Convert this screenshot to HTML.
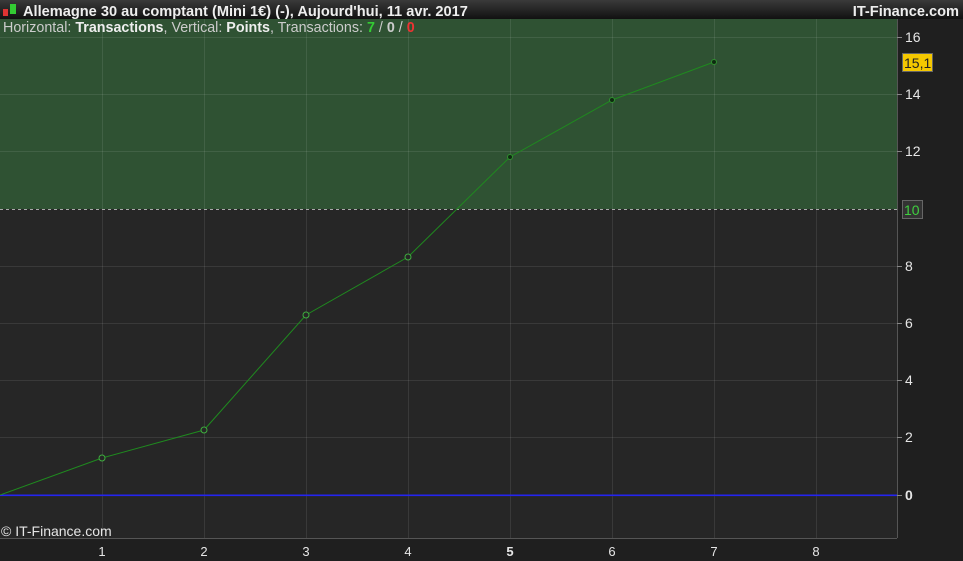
<!DOCTYPE html>
<html><head><meta charset="utf-8"><style>
body{margin:0;width:963px;height:561px;overflow:hidden;background:#1f1f1f;font-family:"Liberation Sans",sans-serif}
svg{display:block}
#blue{position:absolute;left:0;top:495px;width:897px;height:1px;background:#2424f0}
</style></head><body>
<svg width="963" height="561" xmlns="http://www.w3.org/2000/svg" font-family="Liberation Sans, sans-serif">
<defs><linearGradient id="tb" x1="0" y1="0" x2="0" y2="1"><stop offset="0" stop-color="#3a3a3a"/><stop offset="1" stop-color="#111"/></linearGradient></defs>
<rect x="0" y="0" width="963" height="561" fill="#1f1f1f"/>
<rect x="0" y="0" width="963" height="19" fill="url(#tb)"/>
<rect x="0" y="19" width="897" height="519" fill="#262626"/>
<rect x="0" y="19" width="897" height="190" fill="#2f5233"/>
<g stroke="#ffffff" stroke-opacity="0.09" stroke-width="1">
<line x1="102.5" y1="19" x2="102.5" y2="538"/><line x1="204.5" y1="19" x2="204.5" y2="538"/><line x1="306.5" y1="19" x2="306.5" y2="538"/><line x1="408.5" y1="19" x2="408.5" y2="538"/><line x1="510.5" y1="19" x2="510.5" y2="538"/><line x1="612.5" y1="19" x2="612.5" y2="538"/><line x1="714.5" y1="19" x2="714.5" y2="538"/><line x1="816.5" y1="19" x2="816.5" y2="538"/>
<line x1="0" y1="37.5" x2="897" y2="37.5"/><line x1="0" y1="94.5" x2="897" y2="94.5"/><line x1="0" y1="151.5" x2="897" y2="151.5"/><line x1="0" y1="266.5" x2="897" y2="266.5"/><line x1="0" y1="323.5" x2="897" y2="323.5"/><line x1="0" y1="380.5" x2="897" y2="380.5"/><line x1="0" y1="437.5" x2="897" y2="437.5"/>
</g>
<line x1="0" y1="209.5" x2="897" y2="209.5" stroke="#aaa" stroke-dasharray="3,3"/>
<rect x="0" y="494.5" width="897" height="1.6" fill="#2424f0"/>
<line x1="897.5" y1="19" x2="897.5" y2="538" stroke="#555"/>
<line x1="0" y1="538.5" x2="897" y2="538.5" stroke="#555"/>
<polyline points="0,495 102,458 204,430 306,315 408,257 510,157 612,100 714,62" fill="none" stroke="#1f8a1f" stroke-width="1"/>
<g fill="#262626" stroke="#3fae3f"><circle cx="102" cy="458" r="3"/><circle cx="204" cy="430" r="3"/><circle cx="306" cy="315" r="3"/><circle cx="408" cy="257" r="3"/></g>
<g fill="#0e2a10" stroke="#2f8f2f"><circle cx="510" cy="157" r="2.5"/><circle cx="612" cy="100" r="2.5"/><circle cx="714" cy="62" r="2.5"/></g>
<g stroke="#888"><line x1="897" y1="37.5" x2="902" y2="37.5"/><line x1="897" y1="94.5" x2="902" y2="94.5"/><line x1="897" y1="151.5" x2="902" y2="151.5"/><line x1="897" y1="266.5" x2="902" y2="266.5"/><line x1="897" y1="323.5" x2="902" y2="323.5"/><line x1="897" y1="380.5" x2="902" y2="380.5"/><line x1="897" y1="437.5" x2="902" y2="437.5"/><line x1="897" y1="495.5" x2="902" y2="495.5"/></g>
<g fill="#e6e6e6" font-size="14"><text x="905" y="42">16</text><text x="905" y="99">14</text><text x="905" y="156">12</text><text x="905" y="271">8</text><text x="905" y="328">6</text><text x="905" y="385">4</text><text x="905" y="442">2</text><text x="905" y="500" font-weight="bold">0</text></g>
<rect x="902.5" y="53.5" width="30" height="18" fill="#f5c800" stroke="#666"/><text x="904" y="68" font-size="14" fill="#222">15,1</text>
<rect x="902.5" y="200.5" width="20" height="18" fill="#333" stroke="#666"/><text x="904" y="215" font-size="14" fill="#3fcf3f">10</text>
<g fill="#e6e6e6" font-size="13" text-anchor="middle"><text x="102" y="556">1</text><text x="204" y="556">2</text><text x="306" y="556">3</text><text x="408" y="556">4</text><text x="510" y="556" font-weight="bold">5</text><text x="612" y="556">6</text><text x="714" y="556">7</text><text x="816" y="556">8</text></g>
<text x="1" y="536" font-size="14" fill="#e6e6e6">© IT-Finance.com</text>
<rect x="3" y="9" width="5" height="7" fill="#d33"/><rect x="10" y="4" width="6" height="10" fill="#3c3"/>
<text x="23" y="16" font-size="14.6" font-weight="bold" fill="#eee">Allemagne 30 au comptant (Mini 1€) (-), Aujourd'hui, 11 avr. 2017</text>
<text x="959" y="16" font-size="14.6" font-weight="bold" fill="#eee" text-anchor="end">IT-Finance.com</text>
<text x="3" y="32" font-size="14.3" fill="#ccc">Horizontal: <tspan font-weight="bold" fill="#eee">Transactions</tspan>, Vertical: <tspan font-weight="bold" fill="#eee">Points</tspan>, Transactions: <tspan font-weight="bold" fill="#3c3">7</tspan> / <tspan font-weight="bold" fill="#ccc">0</tspan> / <tspan font-weight="bold" fill="#e33">0</tspan></text>
</svg>
<div id="blue"></div>
</body></html>
